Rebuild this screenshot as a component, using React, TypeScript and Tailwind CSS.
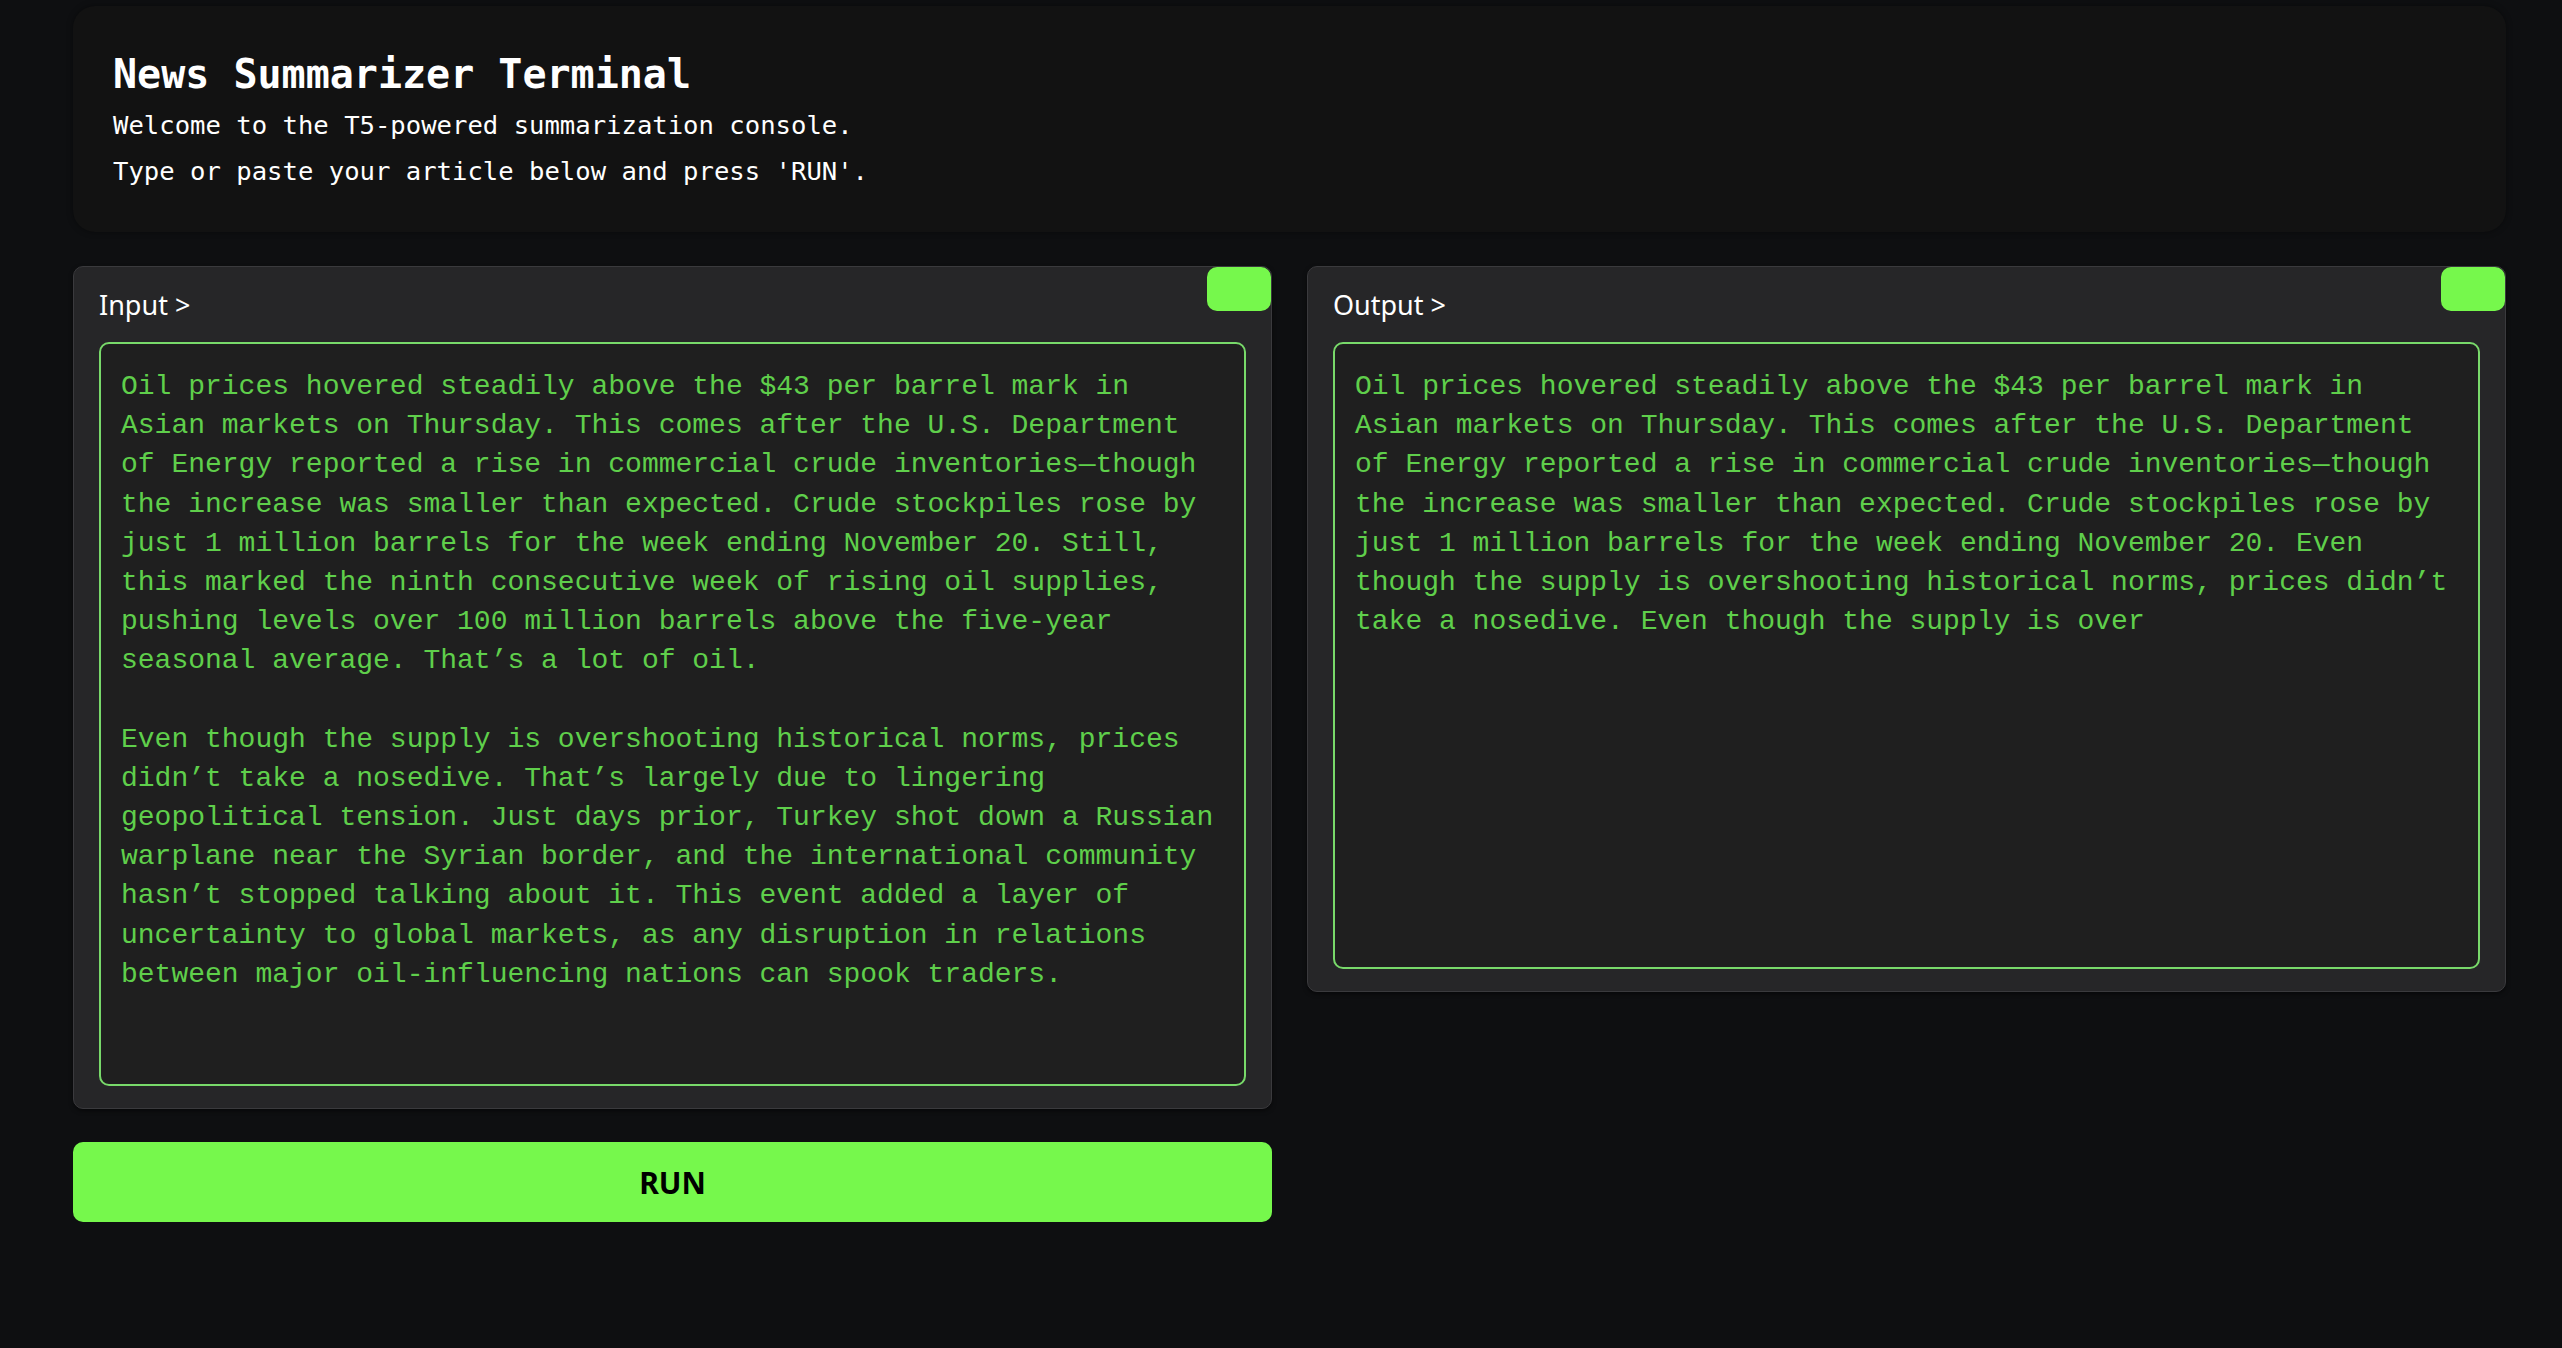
import React from 'react';

const INPUT_TEXT = `Oil prices hovered steadily above the $43 per barrel mark in Asian markets on Thursday. This comes after the U.S. Department of Energy reported a rise in commercial crude inventories—though the increase was smaller than expected. Crude stockpiles rose by just 1 million barrels for the week ending November 20. Still, this marked the ninth consecutive week of rising oil supplies, pushing levels over 100 million barrels above the five-year seasonal average. That’s a lot of oil.

Even though the supply is overshooting historical norms, prices didn’t take a nosedive. That’s largely due to lingering geopolitical tension. Just days prior, Turkey shot down a Russian warplane near the Syrian border, and the international community hasn’t stopped talking about it. This event added a layer of uncertainty to global markets, as any disruption in relations between major oil-influencing nations can spook traders.`;

const OUTPUT_TEXT = `Oil prices hovered steadily above the $43 per barrel mark in Asian markets on Thursday. This comes after the U.S. Department of Energy reported a rise in commercial crude inventories—though the increase was smaller than expected. Crude stockpiles rose by just 1 million barrels for the week ending November 20. Even though the supply is overshooting historical norms, prices didn’t take a nosedive. Even though the supply is over`;

function Panel({ label, text, height }: { label: string; text: string; height: string }) {
    return (
        <div className="relative bg-[#262628] border border-[#3a3a3d] rounded-[10px] pt-[19px] px-[25px] pb-[22px] shadow-[0_2px_4px_rgba(0,0,0,0.5)]">
            <button
                type="button"
                aria-label="copy"
                className="absolute top-0 right-0 w-[64px] h-[44px] bg-[#76f84c] rounded-[10px]"
            />
            <div className="font-['Noto_Sans',sans-serif] text-[27px] leading-[37px] text-white mb-[19px]">{label}</div>
            <textarea
                readOnly
                defaultValue={text}
                className={`block w-full ${height} resize-none bg-[#1f1f1f] border-2 border-[#78d96a] rounded-[10px] pt-[23px] px-[20px] pb-[20px] font-['Courier_New','Nimbus_Mono_PS','FreeMono','Liberation_Mono',monospace] text-[28px] leading-[1.4] text-[#5fcf4b] outline-none`}
            />
        </div>
    );
}

export default function App() {
    return (
        <div className="min-h-screen bg-[#0e0f11] pt-[6px] pl-[73px] pr-[56px] pb-10">
            <div className="flex flex-col gap-[34px] w-[2433px]">
                <div className="bg-[#121212] rounded-[22px] pt-[45px] pb-[38px] px-[40px] shadow-[0_0_6px_rgba(0,0,0,0.4)]">
                    <h1 className="font-['DejaVu_Sans_Mono',monospace] font-bold text-[40px] leading-[46px] text-white mb-[5px]">
                        News Summarizer Terminal
                    </h1>
                    <p className="font-['DejaVu_Sans_Mono',monospace] text-[25.6px] leading-[46px] text-white">
                        Welcome to the T5-powered summarization console.
                    </p>
                    <p className="font-['DejaVu_Sans_Mono',monospace] text-[25.6px] leading-[46px] text-white">
                        Type or paste your article below and press 'RUN'.
                    </p>
                </div>

                <div className="grid grid-cols-2 gap-[35px] items-start">
                    <div className="flex flex-col gap-[33px]">
                        <Panel label="Input >" text={INPUT_TEXT} height="h-[744px]" />
                        <button
                            type="button"
                            className="h-[80px] bg-[#76f84c] rounded-[10px] font-['Noto_Sans',sans-serif] font-bold text-[30px] text-black"
                        >
                            RUN
                        </button>
                    </div>
                    <Panel label="Output >" text={OUTPUT_TEXT} height="h-[627px]" />
                </div>
            </div>
        </div>
    );
}
